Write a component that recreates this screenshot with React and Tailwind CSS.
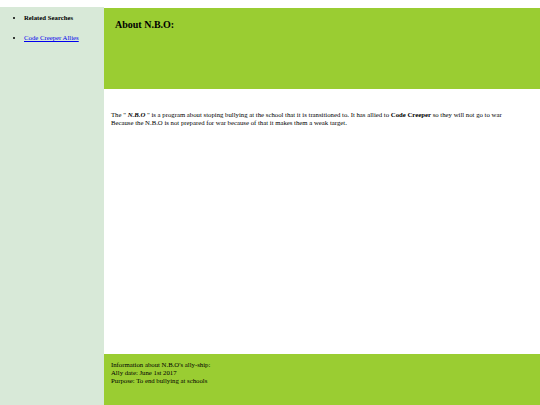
export default function App() {
  return (
    <div className="min-h-[405px] bg-white pt-[7px] font-['Liberation_Serif',serif] text-black">
      <div className="flex h-[398px]">
        <aside className="w-[104px] shrink-0 bg-[#d8e9d8]">
          <ul className="list-disc pl-[24px] pt-[7px] text-[6.75px] leading-[8px]">
            <li className="font-bold">Related Searches</li>
            <li className="mt-[12px]">
              <a href="#" className="text-[#0000ee] underline">Code Creeper Allies</a>
            </li>
          </ul>
        </aside>
        <main className="flex flex-1 flex-col">
          <header className="mt-[1px] h-[81px] bg-[#9acd32] pl-[11px] pt-[11px]">
            <h2 className="text-[10px] font-bold leading-[12px]">About N.B.O:</h2>
          </header>
          <section className="flex-1 pl-[7px] pt-[22px] text-[6.75px] leading-[8px]">
            <p>
              The " <b><i>N.B.O</i></b> " is a program about stoping bullying at the school that it is transitioned to. It has allied to <b>Code Creeper</b> so they will not go to war
              <br />
              Because the N.B.O is not prepared for war because of that it makes them a weak target.
            </p>
          </section>
          <footer className="h-[51px] bg-[#9acd32] pl-[7px] pt-[7px] text-[6.75px] leading-[8px]">
            <p>Information about N.B.O's ally-ship:</p>
            <p>Ally date: June 1st 2017</p>
            <p>Purpose: To end bullying at schools</p>
          </footer>
        </main>
      </div>
    </div>
  )
}
